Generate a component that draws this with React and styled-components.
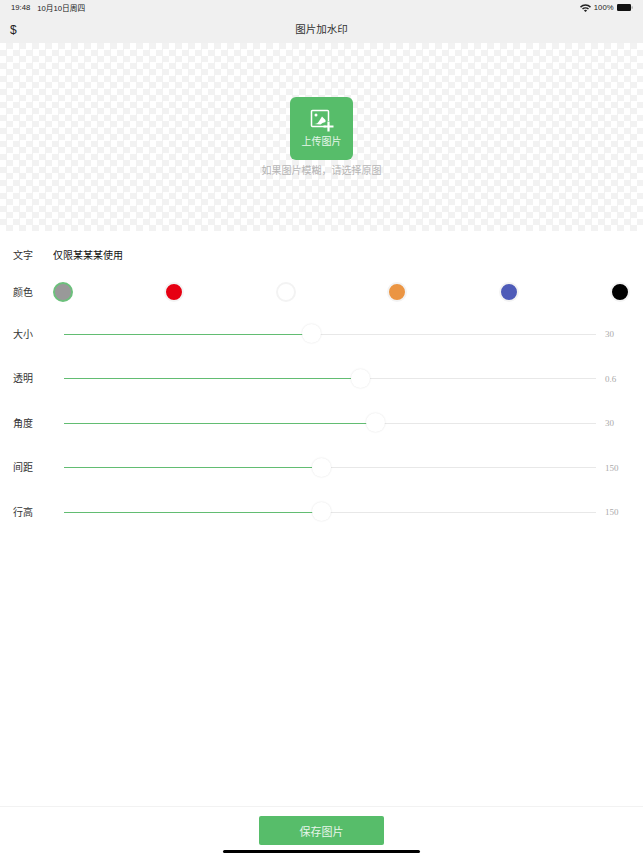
import React from "react";
import styled, { createGlobalStyle } from "styled-components";

const Global = createGlobalStyle`
  html, body { margin: 0; padding: 0; background: #fff; }
  body { font-family: "Noto Sans CJK SC", "Liberation Sans", sans-serif; }
`;
const Page = styled.div`
  position: relative; width: 643px; height: 858px; display: flex; flex-direction: column;
  overflow: hidden; background: #fff; color: #222;
`;
const Header = styled.header`
  height: 43px; background: #f0f0f0; display: flex; flex-direction: column; flex: none;
`;
const StatusBar = styled.div`
  height: 15px; display: flex; align-items: center; justify-content: space-between;
  padding: 0 10.5px 0 11px; font-size: 7.7px; color: #222; font-family: "Liberation Sans", "Noto Sans CJK SC", sans-serif;
`;
const StatusGroup = styled.div`display: flex; align-items: center; gap: ${p => p.$gap || 5}px;`;
const NavBar = styled.div`
  flex: 1; display: grid; grid-template-columns: 1fr auto 1fr; align-items: center; padding: 0 10px;
`;
const Dollar = styled.span`font: 12px "Liberation Sans", sans-serif; color: #222; margin-top: 2px;`;
const NavTitle = styled.span`font-size: 10.5px; color: #333; margin-top: -2px;`;
const Canvas = styled.section`
  height: 188px; flex: none; display: flex; flex-direction: column; align-items: center; padding-top: 54px;
  box-sizing: border-box;
  background: repeating-conic-gradient(#f2f2f2 0 25%, #fff 0 50%) 0 0 / 13px 13px;
`;
const Upload = styled.div`
  width: 63px; height: 63px; border-radius: 6px; background: #57bd6a; color: #fff;
  display: flex; flex-direction: column; align-items: center; font-size: 10px; padding-top: 12px; box-sizing: border-box;
`;
const UploadLabel = styled.span`line-height: 14px; margin-top: 1px; color: #e8f6ea;`;
const Hint = styled.p`margin: 2px 0 0; font-size: 10px; line-height: 16px; color: #b5b5b5;`;
const Form = styled.section`display: flex; flex-direction: column; padding: 6px 0 0;`;
const Row = styled.div`
  display: flex; align-items: center; height: ${p => p.$h}px; padding: 0 13px; font-size: 10px; color: #333;
`;
const Label = styled.span`width: 40px; flex: none; font-size: 10px; color: #333; margin-top: -2px;`;
const Value = styled.span`color: #111; font-size: 10px; margin-top: -2px;`;
const Swatches = styled.div`flex: 1; display: flex; justify-content: space-between; margin-left: -0.5px; margin-right: -0.5px;`;
const Swatch = styled.span`
  width: 16px; height: 16px; border-radius: 50%; background: ${p => p.$color};
  border: 2px solid ${p => p.$active ? "#6cc07c" : "#f3f3f3"};
`;
const Sliders = styled.div`display: flex; flex-direction: column; margin-top: 1px;`;
const Track = styled.div`
  position: relative; width: 532px; margin-left: 11px; height: 1px; background: #e8e8e8; flex: none;
`;
const Fill = styled.div`position: absolute; left: 0; top: 0; bottom: 0; background: #62bd72;`;
const Thumb = styled.div`
  position: absolute; top: -9.5px; width: 19px; height: 19px; margin-left: -9.5px; border-radius: 50%;
  background: #fff; box-shadow: 0 0 2px rgba(0,0,0,.12);
`;
const SliderValue = styled.span`
  margin-left: 9px; font: 9px "Liberation Serif", serif; color: #aaa;
`;
const Footer = styled.footer`
  margin-top: auto; height: 52px; border-top: 1px solid #f2f2f2; display: flex; justify-content: center;
  padding-top: 9px; box-sizing: border-box; flex: none;
`;
const Save = styled.button`
  width: 125px; height: 29px; border: 0; border-radius: 2px; background: #57bd6a; color: #e8f6ea;
  font: 11px "Noto Sans CJK SC", sans-serif; padding: 0;
`;
const HomeBar = styled.div`
  position: absolute; left: 223px; bottom: 5px; width: 197px; height: 3.5px; border-radius: 2px; background: #000;
`;

const Wifi = () => (
  <svg width="11" height="8" viewBox="0 0 11 8" fill="#222">
    <path d="M0 2.6A7.8 7.8 0 0 1 11 2.6L10 3.7A6.3 6.3 0 0 0 1 3.7Z" />
    <path d="M2 4.6A5 5 0 0 1 9 4.6L8 5.6A3.6 3.6 0 0 0 3 5.6Z" />
    <path d="M3.9 6.5A2.3 2.3 0 0 1 7.1 6.5L5.5 8Z" />
  </svg>
);
const Battery = () => (
  <svg width="16" height="7" viewBox="0 0 16 7">
    <rect x="0" y="0" width="14" height="7" rx="1.3" fill="#111" />
    <rect x="14.6" y="2.2" width="1" height="2.6" rx=".5" fill="#999" />
  </svg>
);
const UploadIcon = () => (
  <svg width="24" height="24" viewBox="0 0 24 24" fill="none" stroke="#fff">
    <path d="M16 17.5H2.5a1 1 0 0 1-1-1V2.5a1 1 0 0 1 1-1h15a1 1 0 0 1 1 1V12" strokeWidth="1.5" />
    <circle cx="6" cy="6" r="1.5" fill="#fff" stroke="none" />
    <path d="M4 15c3 0 4-1 5.5-3.5L12 7.5l3.5 3.5V13l-3 1-2 1.5Z" fill="#fff" stroke="none" />
    <path d="M18.5 12.5v10M13.5 17.5h10" strokeWidth="2.2" />
  </svg>
);

const colors = ["#999999", "#e60012", "#ffffff", "#eb9543", "#4e5bb8", "#000000"];
const sliders = [
  ["大小", 247, "30"],
  ["透明", 296, "0.6"],
  ["角度", 311, "30"],
  ["间距", 257, "150"],
  ["行高", 257, "150"],
];

export default function App() {
  return (
    <Page>
      <Global />
      <Header>
        <StatusBar>
          <StatusGroup $gap={7}><span>19:48</span><span>10月10日周四</span></StatusGroup>
          <StatusGroup $gap={3}><Wifi /><span>100%</span><Battery /></StatusGroup>
        </StatusBar>
        <NavBar>
          <Dollar>$</Dollar>
          <NavTitle>图片加水印</NavTitle>
        </NavBar>
      </Header>
      <Canvas>
        <Upload>
          <UploadIcon />
          <UploadLabel>上传图片</UploadLabel>
        </Upload>
        <Hint>如果图片模糊，请选择原图</Hint>
      </Canvas>
      <Form>
        <Row $h={36}><Label>文字</Label><Value>仅限某某某使用</Value></Row>
        <Row $h={38}>
          <Label>颜色</Label>
          <Swatches>
            {colors.map((c, i) => <Swatch key={c} $color={c} $active={i === 0} />)}
          </Swatches>
        </Row>
        <Sliders>
          {sliders.map(([label, pos, value]) => (
            <Row key={label} $h={44.5}>
              <Label>{label}</Label>
              <Track>
                <Fill style={{ width: pos }} />
                <Thumb style={{ left: pos }} />
              </Track>
              <SliderValue>{value}</SliderValue>
            </Row>
          ))}
        </Sliders>
      </Form>
      <Footer><Save>保存图片</Save></Footer>
      <HomeBar />
    </Page>
  );
}
